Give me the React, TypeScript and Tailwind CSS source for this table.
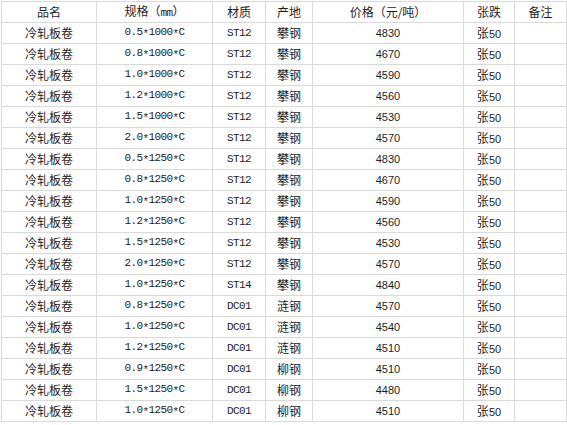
import React from 'react'

type Row = [string, string, string, string, string, string]

const rows: Row[] = [
  ['冷轧板卷', '0.5*1000*C', 'ST12', '攀钢', '4830', '张50'],
  ['冷轧板卷', '0.8*1000*C', 'ST12', '攀钢', '4670', '张50'],
  ['冷轧板卷', '1.0*1000*C', 'ST12', '攀钢', '4590', '张50'],
  ['冷轧板卷', '1.2*1000*C', 'ST12', '攀钢', '4560', '张50'],
  ['冷轧板卷', '1.5*1000*C', 'ST12', '攀钢', '4530', '张50'],
  ['冷轧板卷', '2.0*1000*C', 'ST12', '攀钢', '4570', '张50'],
  ['冷轧板卷', '0.5*1250*C', 'ST12', '攀钢', '4830', '张50'],
  ['冷轧板卷', '0.8*1250*C', 'ST12', '攀钢', '4670', '张50'],
  ['冷轧板卷', '1.0*1250*C', 'ST12', '攀钢', '4590', '张50'],
  ['冷轧板卷', '1.2*1250*C', 'ST12', '攀钢', '4560', '张50'],
  ['冷轧板卷', '1.5*1250*C', 'ST12', '攀钢', '4530', '张50'],
  ['冷轧板卷', '2.0*1250*C', 'ST12', '攀钢', '4570', '张50'],
  ['冷轧板卷', '1.0*1250*C', 'ST14', '攀钢', '4840', '张50'],
  ['冷轧板卷', '0.8*1250*C', 'DC01', '涟钢', '4570', '张50'],
  ['冷轧板卷', '1.0*1250*C', 'DC01', '涟钢', '4540', '张50'],
  ['冷轧板卷', '1.2*1250*C', 'DC01', '涟钢', '4510', '张50'],
  ['冷轧板卷', '0.9*1250*C', 'DC01', '柳钢', '4510', '张50'],
  ['冷轧板卷', '1.5*1250*C', 'DC01', '柳钢', '4480', '张50'],
  ['冷轧板卷', '1.0*1250*C', 'DC01', '柳钢', '4510', '张50'],
]

const cjk = "font-['Noto_Sans_CJK_SC',sans-serif] text-[12px]"
const mono = "font-['Liberation_Mono','Noto_Sans_CJK_SC',monospace] text-[11px] tracking-[-0.6px]"
const num = "font-['Liberation_Sans','Noto_Sans_CJK_SC',sans-serif] text-[11px]"
const cell = 'border border-[#dadada] h-[21px] p-0 text-center leading-none text-[#1e1e1e] whitespace-nowrap'

function Spec({ value }: { value: string }) {
  const parts = value.split('*')
  return (
    <>
      {parts.map((p, i) => (
        <React.Fragment key={i}>
          {i > 0 && <span className="align-[-2px]">*</span>}
          {p}
        </React.Fragment>
      ))}
    </>
  )
}

export default function App() {
  return (
    <div className="bg-white w-[567px] h-[425px] pl-px pt-px">
      <table className="table-fixed border-collapse w-[565px]">
        <colgroup>
          <col className="w-[95px]" />
          <col className="w-[116px]" />
          <col className="w-[53px]" />
          <col className="w-[47px]" />
          <col className="w-[151px]" />
          <col className="w-[51px]" />
          <col className="w-[52px]" />
        </colgroup>
        <thead>
          <tr>
            <th className={`${cell} ${cjk} font-normal`}>品名</th>
            <th className={`${cell} ${cjk} font-normal`}>
              规格（<span className={mono}>mm</span>）
            </th>
            <th className={`${cell} ${cjk} font-normal`}>材质</th>
            <th className={`${cell} ${cjk} font-normal`}>产地</th>
            <th className={`${cell} ${cjk} font-normal`}>价格（元/吨）</th>
            <th className={`${cell} ${cjk} font-normal`}>张跌</th>
            <th className={`${cell} ${cjk} font-normal`}>备注</th>
          </tr>
        </thead>
        <tbody>
          {rows.map((r, i) => (
            <tr key={i}>
              <td className={`${cell} ${cjk}`}>{r[0]}</td>
              <td className={`${cell} ${mono}`}>
                <Spec value={r[1]} />
              </td>
              <td className={`${cell} ${mono}`}>{r[2]}</td>
              <td className={`${cell} ${cjk}`}>{r[3]}</td>
              <td className={`${cell} ${num}`}>{r[4]}</td>
              <td className={`${cell} ${cjk}`}>
                张<span className={num}>{r[5].slice(1)}</span>
              </td>
              <td className={cell}></td>
            </tr>
          ))}
        </tbody>
      </table>
    </div>
  )
}
